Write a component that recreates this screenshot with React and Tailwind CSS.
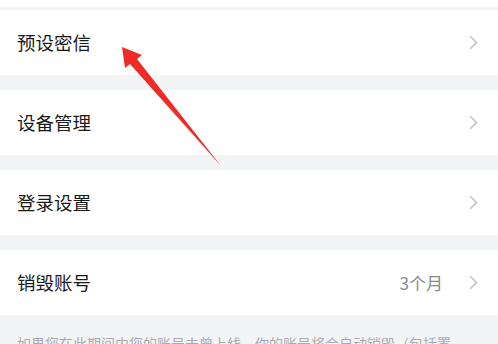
import React from 'react';

const Chevron = () => (
  <svg width="9" height="15" viewBox="0 0 9 15" fill="none">
    <path d="M1.5 1.5L7.5 7.5l-6 6" stroke="#c4c4c6" strokeWidth="1.6" strokeLinecap="round" strokeLinejoin="round" />
  </svg>
);

const Row = ({ label, value }) => (
  <div className="h-[65px] bg-white flex items-center justify-between pl-[17px] pr-[20px]">
    <span className="text-[18.5px] text-[#1a1a1a]">{label}</span>
    <div className="flex items-center gap-[26px]">
      {value && <span className="text-[17px] text-[#8a8a8a]">{value}</span>}
      <Chevron />
    </div>
  </div>
);

const Gap = () => <div className="h-[15px] bg-[#f3f4f6]" />;

export default function App() {
  return (
    <div
      className="relative w-[498px] h-[344px] overflow-hidden bg-[#f3f4f6]"
      style={{ fontFamily: '"Noto Sans CJK SC", "Noto Sans", sans-serif' }}
    >
      <div className="h-[7px] bg-white" />
      <div className="h-[3px] bg-[#f3f4f6]" />
      <Row label="预设密信" />
      <Gap />
      <Row label="设备管理" />
      <Gap />
      <Row label="登录设置" />
      <Gap />
      <Row label="销毁账号" value="3个月" />
      <div className="pt-[17px] pl-[17px] pr-[10px] text-[14px] text-[#a8abb0] whitespace-nowrap leading-[22px]">
        如果您在此期间内您的账号未曾上线，你的账号将会自动销毁（包括置
      </div>

      <svg className="absolute left-0 top-0" width="498" height="344" viewBox="0 0 498 344">
        <polygon
          points="122,47 142,55 137,59 221,166 130,64 125,68"
          fill="#ef2b27"
        />
      </svg>
    </div>
  );
}
